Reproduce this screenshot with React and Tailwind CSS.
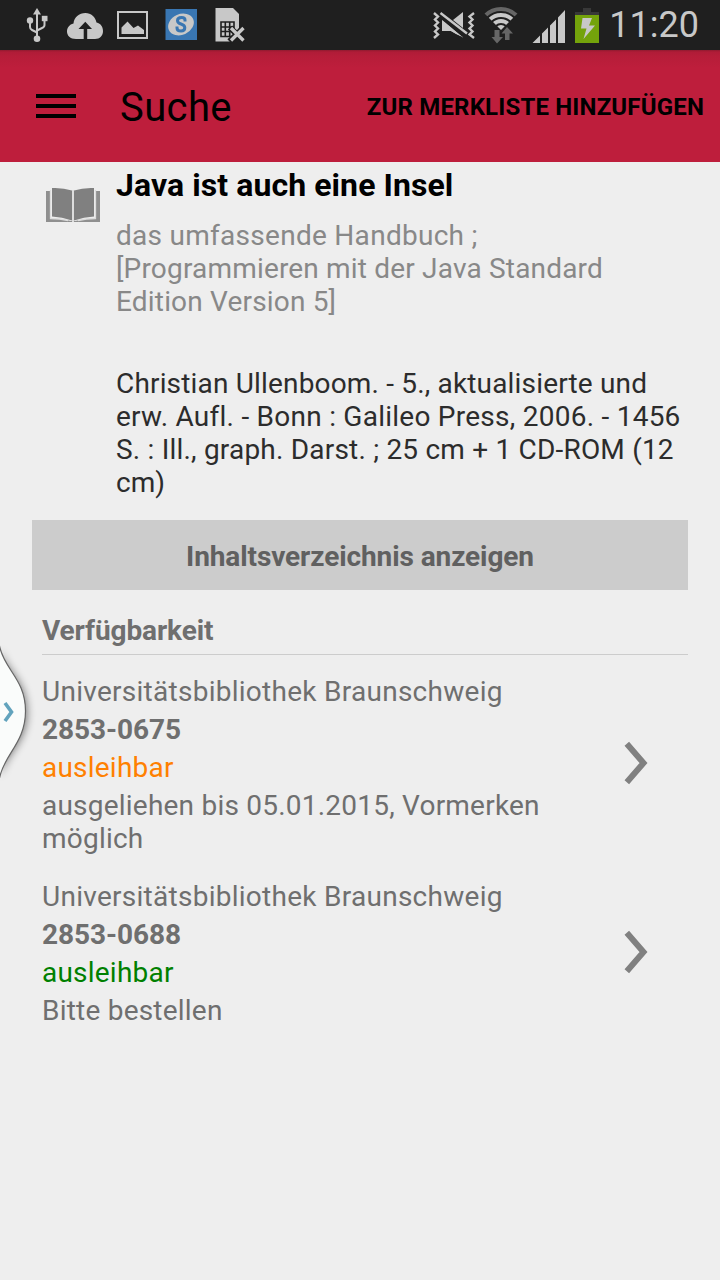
import React from "react";

function StatusBar() {
  return (
    <div className="flex h-[50px] items-start bg-[#1f1f1f] text-[#c8c8c8]">
      <svg className="ml-[25px]" width="24" height="50" viewBox="25 0 24 50" fill="none" stroke="#c8c8c8" strokeWidth="2">
        <path d="M37 12V38M30 22V27Q30 29 32 30L37 32.500M44.500 19V25Q44.500 27 42 28L37 30.500" />
        <path d="M37 8L41 14.500H33Z" fill="#c8c8c8" stroke="none" />
        <circle cx="30" cy="20.500" r="3.200" fill="#c8c8c8" stroke="none" />
        <rect x="41.800" y="15.800" width="5.700" height="5.400" fill="#c8c8c8" stroke="none" />
        <circle cx="37" cy="38.800" r="3.300" fill="#c8c8c8" stroke="none" />
      </svg>
      <svg className="ml-[17px]" width="38" height="50" viewBox="66 0 38 50">
        <path d="M76 39C70 39 67 35.500 67 31.500C67 27.500 69.500 24.500 73.500 23.500C74 17.500 79 13 85.500 13C91 13 95.500 17 96.500 22.500C101 23.500 103 27 103 31C103 35.500 100 39 95 39H87.200V29H92L85.300 21.800L78.500 29H83.700V39Z" fill="#c8c8c8" />
      </svg>
      <svg className="ml-[12px]" width="33" height="50" viewBox="116 0 33 50">
        <rect x="118" y="12" width="29" height="26" fill="none" stroke="#c8c8c8" strokeWidth="2" />
        <path d="M121.500 34V27.500L127.500 21.500L133.500 28L138 25.500L144 30V34Z" fill="#c8c8c8" />
      </svg>
      <svg className="ml-[15px]" width="34" height="50" viewBox="164 0 34 50">
        <rect x="165.500" y="9" width="31.500" height="31" fill="#3976b2" />
        <ellipse cx="181" cy="24.500" rx="13.300" ry="10.300" transform="rotate(-24 181 24.500)" fill="#c8c8c8" />
        <path d="M185 21.500V20Q185 17.500 181.500 17.500Q177.500 17.500 177.500 20.500Q177.500 23 181 24Q184.800 25.200 184.800 27.800Q184.800 31 181 31Q177 31 177 28V26.500" fill="none" stroke="#3976b2" strokeWidth="3" />
      </svg>
      <svg className="ml-[16px]" width="32" height="50" viewBox="214 0 32 50">
        <path d="M215.500 8H233L239 14V28L232 41.500H215.500Z" fill="#c8c8c8" />
        <path d="M221 22H234V36.500H221ZM225.300 22V36.500M229.700 22V36.500M221 27H234M221 31.500H234" fill="none" stroke="#1f1f1f" strokeWidth="1.600" />
        <path d="M230 27.500L244 41.500M244 27.500L229.500 41.500" stroke="#1f1f1f" strokeWidth="6" />
        <path d="M231 28L243.500 40.500M243.500 28L231 40.500" stroke="#c8c8c8" strokeWidth="3.300" />
      </svg>

      <svg className="ml-auto" width="44" height="50" viewBox="432 0 44 50" fill="none" stroke="#c8c8c8">
        <path d="M434 13L438 16.500L435 19.500L438 22.500L435 25.500L438 28.500L435 31.500L438 34.500L434 38M474 13L469.500 16.500L472.500 19.500L469.500 22.500L472.500 25.500L469.500 28.500L472.500 31.500L469.500 34.500L474 38" strokeWidth="2.400" />
        <path d="M442 20L463 37.500L451 31H442ZM453 20L463 12V28Z" fill="#c8c8c8" stroke="none" />
        <path d="M442 20L463 37.500V37L456 34L451 31" fill="#c8c8c8" stroke="none" />
        <path d="M440.500 13L467 33.500" strokeWidth="2.400" />
      </svg>
      <svg className="ml-[7px]" width="36" height="50" viewBox="483 0 36 50" fill="none">
        <defs>
          <clipPath id="wedge"><path d="M501 30L481 10V0H521V10Z" /></clipPath>
        </defs>
        <g clipPath="url(#wedge)">
          <circle cx="501" cy="31" r="22" stroke="#666666" strokeWidth="4" />
          <circle cx="501" cy="31" r="16" stroke="#c8c8c8" strokeWidth="4" />
          <circle cx="501" cy="31" r="10" stroke="#c8c8c8" strokeWidth="4" />
          <circle cx="501" cy="31" r="6" fill="#c8c8c8" />
        </g>
        <path d="M494.500 30H499.500V37H503L497 43.500L491.500 37H494.500ZM505 40V33.500H501.500L507 27L513 33.500H509.500V40Z" fill="#666666" />
      </svg>
      <svg className="ml-[13px]" width="34" height="50" viewBox="532 0 34 50">
        <path d="M532.500 43L540 35.500V43ZM542 33.500L548 27.500V43H542ZM550 25.500L556 19.500V43H550ZM558 17.500L565 10V43H558Z" fill="#c8c8c8" />
      </svg>
      <svg className="ml-[8px]" width="26" height="50" viewBox="574 0 26 50">
        <path d="M583 8H591V12H599V15H575V12H583Z" fill="#383838" />
        <rect x="575" y="15" width="24" height="28" fill="#74a30b" />
        <path d="M582.500 18H592L589 25.500H595L583.500 39L586.500 28.500H581Z" fill="#c8c8c8" />
      </svg>
      <span className="mr-[21px] ml-[9px] w-[90px] whitespace-nowrap pt-[4px] text-right text-[36px] leading-[42px] text-[#c8c8c8]">11:20</span>
    </div>
  );
}

function Chevron() {
  return (
    <svg className="mr-[40px] mb-1 shrink-0" width="26" height="44" viewBox="0 0 26 44">
      <path d="M4.800 2.800L21.500 22L4.800 41.200" fill="none" stroke="#808080" strokeWidth="6" />
    </svg>
  );
}

function Holding({ signature, status, statusClass, note, className }) {
  return (
    <div className={"flex items-center " + className}>
      <div className="flex min-w-0 flex-1 flex-col gap-[5px] text-[28px] leading-[33px] tracking-[0.22px] text-[#6f6f6f]">
        <div className="tracking-[0.27px]">Universitätsbibliothek Braunschweig</div>
        <div className="font-bold tracking-[-0.05px]">{signature}</div>
        <div className={statusClass}>{status}</div>
        <div>{note}</div>
      </div>
      <Chevron />
    </div>
  );
}

export default function App() {
  return (
    <div className="relative h-[1280px] w-[720px] overflow-hidden bg-[#eeeeee] font-['Roboto',sans-serif]">
      <StatusBar />
      <header className="flex h-[112px] items-center bg-[linear-gradient(#8f1a30_0,#b01c37_2px,#b61d39_6px,#be1e3c_18px)] pr-4 pl-9 text-black">
        <div className="flex flex-col gap-[6px]">
          <i className="h-1 w-10 bg-black" />
          <i className="h-1 w-10 bg-black" />
          <i className="h-1 w-10 bg-black" />
        </div>
        <h1 className="ml-11 pt-1 text-[40px] leading-[48px] tracking-[0.4px]">Suche</h1>
        <button className="ml-auto pt-[2px] whitespace-nowrap text-2xl leading-7 font-bold tracking-[0.17px]">ZUR MERKLISTE HINZUFÜGEN</button>
      </header>

      <main>
        <section className="flex pl-[45px]">
          <svg className="mt-[24px] shrink-0" width="56" height="38" viewBox="45 186 56 38">
            <path d="M46 191H50V218.500Q60 218 71 221H75Q86 218 96 218.500V191H100V222H46Z" fill="#8f8f8f" />
            <path d="M50.500 190V218.500Q60 218.500 68 220.500M95.500 190V218.500Q86 218.500 78 220.500" stroke="#dddddd" strokeWidth="1.300" fill="none" />
            <path d="M73 190V222" stroke="#dddddd" strokeWidth="2" />
            <path d="M52 188Q63 187.500 72 190.500V220.500Q62 217 52 216.500ZM94 188Q83 187.500 74 190.500V220.500Q84 217 94 216.500Z" fill="#808080" />
          </svg>
          <div className="ml-[15px] w-[572px] text-[28px] leading-[33px]">
            <h2 className="pt-1 text-[32px] leading-[38px] font-bold tracking-[0.08px] text-black">Java ist auch eine Insel</h2>
            <p className="mt-[15px] tracking-[0.18px] text-[#888888]">
              <span className="tracking-[0.28px]">das umfassende Handbuch ;</span><br />[Programmieren mit der Java Standard<br />Edition Version 5]
            </p>
            <p className="mt-[49px] whitespace-nowrap text-[#2c2c2c]">
              <span className="tracking-[0.17px]">Christian Ullenboom. - 5., aktualisierte und</span><br />
              <span className="tracking-[0.25px]">erw. Aufl. - Bonn : Galileo Press, 2006. - 1456</span><br />
              <span className="tracking-[0.2px]">S. : Ill., graph. Darst. ; 25 cm + 1 CD-ROM (12</span><br />cm)
            </p>
          </div>
        </section>
        <div className="mt-[21px] px-8">
          <button className="block h-[70px] w-full bg-[#cccccc] pt-[4px] text-[28px] font-bold tracking-[-0.1px] text-[#606060]">Inhaltsverzeichnis anzeigen</button>
        </div>
        <section className="mt-6 mr-8 ml-[42px]">
          <h3 className="h-[41px] border-b border-[#cccccc] text-[28px] leading-[33px] font-bold tracking-[-0.1px] text-[#6f6f6f]">Verfügbarkeit</h3>
          <Holding className="mt-5" signature="2853-0675" status="ausleihbar" statusClass="text-[#ff8000]" note={<>ausgeliehen bis 05.01.2015, Vormerken<br />möglich</>} />
          <Holding className="mt-[25px]" signature="2853-0688" status="ausleihbar" statusClass="text-[#008000]" note="Bitte bestellen" />
        </section>
      </main>

      <svg className="absolute top-[630px] left-0" width="50" height="160" viewBox="0 630 50 160">
        <defs>
          <filter id="shade" x="-50%" y="-20%" width="220%" height="140%"><feGaussianBlur stdDeviation="4" /></filter>
        </defs>
        <path d="M0 650C6 671 27 680 27 713C27 742 6 754 0 776Z" fill="#000000" opacity=".5" filter="url(#shade)" />
        <path d="M-2 640L0 648C5 670 25.500 680 25.500 711C25.500 742 5 754 0 776L-2 784Z" fill="#fafcfb" stroke="#666666" strokeWidth="1.200" />
        <path d="M5 703L11.500 712L5 721" fill="none" stroke="#62a3bd" strokeWidth="3.600" />
      </svg>
    </div>
  );
}
